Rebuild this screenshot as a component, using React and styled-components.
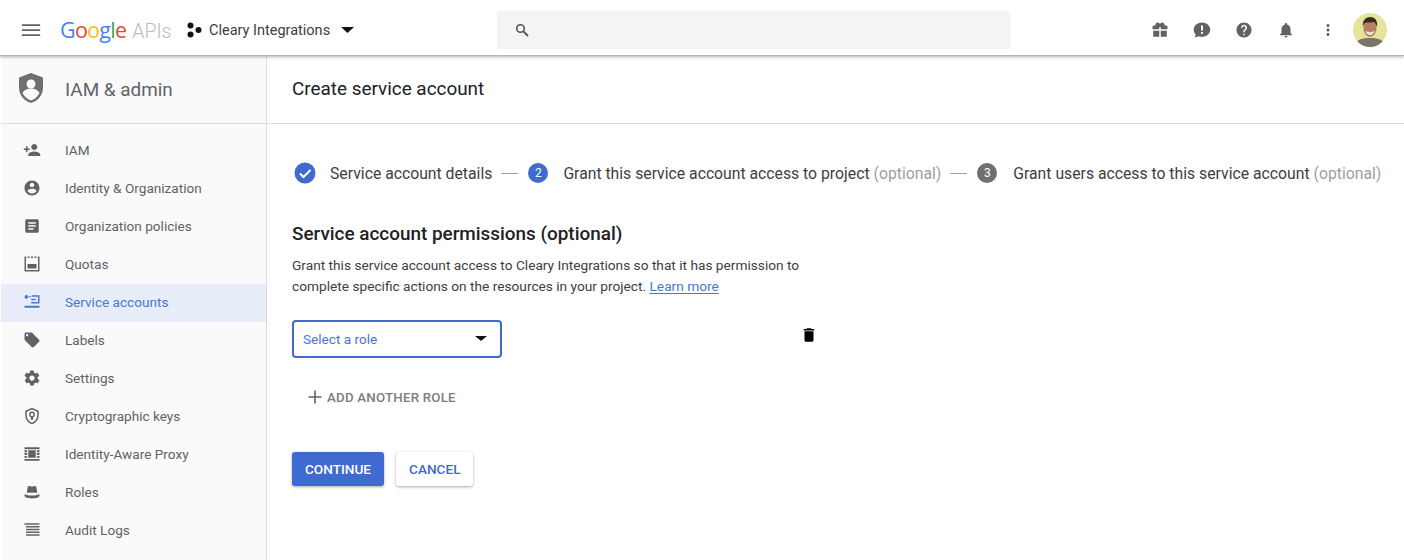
import React from 'react';
import styled, { createGlobalStyle } from 'styled-components';

const Global = createGlobalStyle`
  html, body { margin: 0; padding: 0; background: #fff; }
  body { font-family: Roboto, "Liberation Sans", sans-serif; width: 1404px; height: 560px; overflow: hidden; }
  * { box-sizing: border-box; }
`;

const Page = styled.div`
  width: 1404px; height: 560px; display: flex; flex-direction: column; overflow: hidden;
`;
const Header = styled.header`
  height: 56px; flex: none; display: flex; align-items: center; background: #fff;
  padding: 5px 0 0 21px; position: relative; z-index: 2;
  border-bottom: 1px solid #b4b4b4;
  box-shadow: 0 1px 3px rgba(0,0,0,.3);
`;
const Logo = styled.div`
  display: flex; align-items: baseline; margin-left: 19px; font-family: "Open Sans", Roboto, sans-serif;
  font-size: 21.5px; letter-spacing: -0.75px; width: 127px; margin-top: -1px;
`;
const Apis = styled.span`
  color: #b9bbbe; margin-left: 6px; font-family: Roboto, sans-serif; font-size: 19.5px; font-weight: 300; letter-spacing: 0;
`;
const Project = styled.div`
  display: flex; align-items: center; font-size: 14.5px; color: #3c4043; width: 310px;
`;
const ProjectName = styled.span`
  margin-left: 7px; margin-right: 11px;
`;
const Search = styled.div`
  width: 513px; height: 38px; background: #f4f4f4; border-radius: 2px; display: flex; align-items: center; padding-left: 18px;
`;
const Actions = styled.div`
  margin-left: 129px; display: flex; align-items: center;
`;
const ActionSlot = styled.div`
  width: 42px; display: flex; justify-content: center; align-items: center;
`;
const Avatar = styled.svg`
  width: 34px; height: 34px; margin-left: 4px; border-radius: 50%; flex: none;
`;
const Body = styled.div`
  flex: 1; display: flex; min-height: 0;
`;
const Side = styled.aside`
  width: 267px; flex: none; background: #fafafa; border-right: 1px solid #dadce0; border-left: 1px solid #fff;
`;
const SideHead = styled.div`
  height: 68px; display: flex; align-items: center; padding-left: 17px; border-bottom: 1px solid #dadce0;
  font-size: 18.9px; color: #5f6368;
`;
const ShieldIcon = styled.svg`
  width: 26px; height: 32px; margin-top: -3px; flex: none;
`;
const SideTitle = styled.span`
  margin-left: 21px; margin-top: -1px;
`;
const Nav = styled.nav`
  padding-top: 8px;
`;
const Item = styled.div`
  height: 38px; display: flex; align-items: center; padding-left: 22px; font-size: 13.6px; padding-bottom: 2px;
  color: ${p => (p.$active ? '#4a76d4' : '#5f6368')};
  background: ${p => (p.$active ? '#e8eef9' : 'transparent')};
`;
const ItemIcon = styled.svg`
  width: 18px; height: 18px; flex: none; fill: currentColor;
`;
const ItemLabel = styled.span`
  margin-left: 24px; margin-top: -1px;
`;
const Main = styled.main`
  flex: 1; min-width: 0;
`;
const MainHead = styled.div`
  height: 68px; display: flex; align-items: center; padding: 0 0 2px 25px; border-bottom: 1px solid #dadce0;
  font-size: 18.9px; color: #202124;
`;
const Content = styled.div`
  padding: 34px 0 0 25px;
`;
const Steps = styled.div`
  display: flex; align-items: center; height: 30px; font-size: 15.75px; color: #3c4043; white-space: nowrap;
`;
const StepNum = styled.span`
  width: 20px; height: 20px; border-radius: 50%; display: flex; align-items: center; justify-content: center;
  font-size: 12px; color: #fff; background: ${p => (p.$grey ? '#6f6f6f' : '#3f6ad0')};
  margin-right: ${p => (p.$grey ? '16px' : '15px')}; flex: none;
`;
const Check = styled.svg`
  width: 22px; height: 22px; margin-left: 2px; margin-right: 14px; flex: none;
`;
const Dash = styled.span`
  width: 17px; height: 1px; background: #9e9e9e; margin: 0 10px 0 9px; flex: none;
`;
const Optional = styled.span`
  color: #9aa0a6; margin-left: 4px;
`;
const Title = styled.h2`
  margin: 34px 0 0; font-size: 18.9px; line-height: 24px; font-weight: 500; color: #202124;
`;
const Desc = styled.p`
  margin: 9px 0 0; width: 525px; font-size: 13.7px; line-height: 21px; color: #3c4043;
`;
const Learn = styled.a`
  color: #4a76d4; text-decoration: underline; text-underline-offset: 2px; text-decoration-thickness: 1px;
`;
const RoleRow = styled.div`
  display: flex; align-items: flex-start; margin-top: 23px;
`;
const Select = styled.div`
  width: 210px; height: 38px; border: 2px solid #3f6ad0; border-radius: 4px; display: flex; align-items: center;
  justify-content: space-between; padding: 0 13px 1px 9px; font-size: 13.6px; color: #4a76d4;
`;
const Caret = styled.span`
  width: 0; height: 0; border-left: 6px solid transparent; border-right: 6px solid transparent; border-top: 5.5px solid #111;
`;
const Trash = styled.svg`
  width: 18px; height: 18px; margin-left: 298px; margin-top: 6px; fill: #000;
`;
const AddRole = styled.div`
  display: flex; align-items: center; margin: 31px 0 0 15px; font-size: 13.3px; font-weight: 500; color: #7d7d7d; letter-spacing: .2px;
`;
const PlusIcon = styled.svg`
  width: 16px; height: 16px; margin-right: 4px; fill: #5f6368; flex: none;
`;
const Buttons = styled.div`
  display: flex; gap: 12px; margin-top: 47px;
`;
const Btn = styled.button`
  height: 34px; padding: 0 13px; border: 0; border-radius: 3px; font: 500 13.6px Roboto, sans-serif;
  color: ${p => (p.$primary ? '#fff' : '#3f6ad0')}; background: ${p => (p.$primary ? '#3f6ad0' : '#fff')};
  box-shadow: 0 1px 3px rgba(0,0,0,.35);
`;

const icons = {
  iam: 'M15 12c2.200 0 4-1.800 4-4s-1.800-4-4-4-4 1.800-4 4 1.800 4 4 4zm-9-2V7H4v3H1v2h3v3h2v-3h3v-2H6zm9 4c-2.700 0-8 1.300-8 4v2h16v-2c0-2.700-5.300-4-8-4z',
  id: 'M12 2C6.500 2 2 6.500 2 12s4.500 10 10 10 10-4.500 10-10S17.500 2 12 2zm0 3c1.700 0 3 1.300 3 3s-1.300 3-3 3-3-1.300-3-3 1.300-3 3-3zm0 14.200c-2.500 0-4.700-1.300-6-3.200 0-2 4-3.100 6-3.100s6 1.100 6 3.100c-1.300 1.900-3.500 3.200-6 3.200z',
  policy: 'M19 3H5c-1.100 0-2 .9-2 2v14c0 1.100.9 2 2 2h14c1.100 0 2-.9 2-2V5c0-1.100-.9-2-2-2zm-5 14H7v-2h7v2zm3-4H7v-2h10v2zm0-4H7V7h10v2z',
  quota: 'M2 2h2.500v2H2zm4.300 0h2.500v2H6.300zm4.400 0h2.600v2h-2.600zm4.500 0h2.500v2h-2.500zm4.300 0H22v2h-2.500zM2 4h2v16h16V4h2v18H2zM6 12h12v6H6z',
  service: 'M2 5a2.500 2.500 0 1 0 5 0 2.500 2.500 0 0 0-5 0zm5.600-.8h3.400v1.600H7.600zM12 3h10v11H11v-2h9V5h-8zM11 7.500h6v2h-6zM2 17h20v2.500H2z',
  labels: 'M21.400 11.600l-9-9C12 2.200 11.500 2 11 2H4c-1.100 0-2 .9-2 2v7c0 .6.2 1.100.6 1.400l9 9c.4.4.9.6 1.400.6s1.100-.2 1.400-.6l7-7c.4-.4.6-.9.6-1.400s-.2-1.100-.6-1.400zM5.500 7C4.700 7 4 6.300 4 5.500S4.700 4 5.500 4 7 4.700 7 5.500 6.300 7 5.500 7z',
  settings: 'M19.400 13c0-.3.1-.6.1-1s0-.7-.1-1l2.100-1.600c.2-.2.2-.4.1-.6l-2-3.500c-.1-.2-.4-.3-.6-.2l-2.500 1c-.5-.4-1.100-.7-1.700-1l-.4-2.600c0-.2-.2-.4-.5-.4h-4c-.3 0-.5.2-.5.4l-.4 2.600c-.6.3-1.200.6-1.700 1l-2.500-1c-.2-.1-.5 0-.6.2l-2 3.500c-.1.2-.1.5.1.6L4.600 11c0 .3-.1.6-.1 1s0 .7.1 1l-2.100 1.600c-.2.2-.2.4-.1.6l2 3.500c.1.2.4.3.6.2l2.500-1c.5.4 1.100.7 1.700 1l.4 2.600c0 .2.2.4.5.4h4c.3 0 .5-.2.5-.4l.4-2.600c.6-.3 1.200-.6 1.700-1l2.500 1c.2.1.5 0 .6-.2l2-3.500c.1-.2.1-.5-.1-.6L19.400 13zM12 15.500c-1.900 0-3.500-1.600-3.500-3.500s1.600-3.500 3.500-3.500 3.500 1.600 3.500 3.500-1.600 3.500-3.500 3.500z',
  crypto: 'M12 1L3 5v6c0 5.500 3.800 10.700 9 12 5.200-1.300 9-6.500 9-12V5l-9-4zm0 2.200l7 3.100V11c0 4.500-3 8.700-7 9.900-4-1.200-7-5.400-7-9.900V6.300l7-3.100zM12 6a4 4 0 0 0-1.500 7.700V17h3v-3.300A4 4 0 0 0 12 6zm0 2a2 2 0 1 1 0 4 2 2 0 0 1 0-4z',
  proxy: 'M2 3h20v2.500H2zm0 15.500h20V21H2zM7 7h10v10H7zM2 7h3.500v2.500H2zm0 3.800h3.500v2.500H2zm0 3.700h3.500V17H2zM18.500 7H22v2.500h-3.500zm0 3.800H22v2.500h-3.500zm0 3.700H22V17h-3.500z',
  roles: 'M6 6c.3-1.200 1.200-2 2.500-2 1 0 2.200.6 3.500.6S14.500 4 15.500 4c1.300 0 2.200.8 2.500 2l1 7H5zM2 15c3 1.300 6.500 1.800 10 1.800s7-.5 10-1.800v2c0 2-5 3.500-10 3.500S2 19 2 17z',
  audit: 'M2 3h20v2H2zm2 3.700h18v2H4zm0 3.700h18v2H4zm0 3.700h18v2H4zm0 3.700h18v2H4z',
};

const items = [
  ['iam', 'IAM'],
  ['id', 'Identity & Organization'],
  ['policy', 'Organization policies'],
  ['quota', 'Quotas'],
  ['service', 'Service accounts', true],
  ['labels', 'Labels'],
  ['settings', 'Settings'],
  ['crypto', 'Cryptographic keys'],
  ['proxy', 'Identity-Aware Proxy'],
  ['roles', 'Roles'],
  ['audit', 'Audit Logs'],
];

const topIcons = [
  'M20 6h-2.200c.1-.3.2-.7.2-1 0-1.700-1.300-3-3-3-1 0-1.900.5-2.500 1.300L12 4l-.5-.7C10.900 2.500 10 2 9 2 7.300 2 6 3.300 6 5c0 .3.1.7.2 1H4C2.900 6 2 6.900 2 8v3h9V8h2v3h9V8c0-1.100-.9-2-2-2zM3 13v8h8v-8zm10 0v8h8v-8z',
  'M12 2C6 2 1 6 1 11.500c0 2.500 1 4.800 2.700 6.500L2 22l5.500-1.800c1.400.5 2.900.8 4.500.8 6 0 11-4.300 11-9.500S18 2 12 2zm1.300 15h-2.600v-2.500h2.600zm0-4.500h-2.600V6h2.600z',
  'M12 2C6.500 2 2 6.500 2 12s4.500 10 10 10 10-4.500 10-10S17.500 2 12 2zm1 17h-2v-2h2zm2.100-7.700l-.9.900c-.8.700-1.200 1.300-1.200 2.800h-2v-.5c0-1.100.4-2.100 1.200-2.800l1.200-1.300c.4-.3.600-.8.600-1.400 0-1.100-.9-2-2-2s-2 .9-2 2H8c0-2.200 1.800-4 4-4s4 1.800 4 4c0 .9-.4 1.700-.9 2.300z',
  'M12 22c1.100 0 2-.9 2-2h-4c0 1.100.9 2 2 2zm6-6v-5c0-3.100-1.600-5.600-4.500-6.300V4c0-.8-.7-1.500-1.500-1.500s-1.500.7-1.500 1.500v.7C7.600 5.400 6 7.900 6 11v5l-2 2v1h16v-1z',
  'M12 8c1.100 0 2-.9 2-2s-.9-2-2-2-2 .9-2 2 .9 2 2 2zm0 2c-1.100 0-2 .9-2 2s.9 2 2 2 2-.9 2-2-.9-2-2-2zm0 6c-1.100 0-2 .9-2 2s.9 2 2 2 2-.9 2-2-.9-2-2-2z',
];

const GoogleWord = () => (
  <span>
    <span style={{ color: '#4285f4' }}>G</span>
    <span style={{ color: '#ea4335' }}>o</span>
    <span style={{ color: '#fbbc05' }}>o</span>
    <span style={{ color: '#4285f4' }}>g</span>
    <span style={{ color: '#34a853' }}>l</span>
    <span style={{ color: '#ea4335' }}>e</span>
  </span>
);

export default function App() {
  return (
    <Page>
      <Global />
      <Header>
        <svg width="20" height="20" viewBox="0 0 24 24" fill="#5f6368"><path d="M1 5h22v2.200H1zm0 6h22v2.200H1zm0 6h22v2.200H1z" /></svg>
        <Logo><GoogleWord /><Apis>APIs</Apis></Logo>
        <Project>
          <svg width="15" height="16" viewBox="0 0 15 16" fill="#111"><circle cx="3.500" cy="3.500" r="3" /><circle cx="3.500" cy="12.500" r="3" /><circle cx="11.500" cy="8" r="3" /></svg>
          <ProjectName>Cleary Integrations</ProjectName>
          <svg width="13" height="6" viewBox="0 0 13 6" fill="#111"><path d="M0 0h13L6.500 6z" /></svg>
        </Project>
        <Search>
          <svg width="14" height="14" viewBox="0 0 14 14" fill="none" stroke="#555"><circle cx="5.500" cy="5.500" r="3.800" strokeWidth="1.600" /><path d="M8.400 8.400L13 13" strokeWidth="2" /></svg>
        </Search>
        <Actions>
          {topIcons.map((d, i) => (
            <ActionSlot key={i}>
              <svg width="18" height="18" viewBox="0 0 24 24" fill="#5f6368"><path d={d} /></svg>
            </ActionSlot>
          ))}
          <Avatar viewBox="0 0 34 34">
            <defs><filter id="soft"><feGaussianBlur stdDeviation="0.6" /></filter></defs>
            <rect width="34" height="34" fill="#e6e39a" />
            <g filter="url(#soft)">
              <path d="M2 34c0-7 6-9 15-9s15 2 15 9z" fill="#77756c" />
              <ellipse cx="17" cy="15" rx="6.500" ry="9" fill="#b5805e" />
              <path d="M10 14c-1-7 3-10 7.500-10S25 8 24 14c-1-3-2-5-4-5-3 1-6 0-8 1-1 1-2 2-2 4z" fill="#3a2c22" />
              <path d="M12.500 18c3 1.500 6 1.500 9 0-1 3-2.500 4-4.500 4s-3.500-1-4.500-4z" fill="#efe8df" />
            </g>
          </Avatar>
        </Actions>
      </Header>
      <Body>
        <Side>
          <SideHead>
            <ShieldIcon viewBox="0 0 26 32"><path d="M13 1L1 5.500v10C1 23 6 29 13 31c7-2 12-8 12-15.500v-10z" fill="#6f6f6f" /><circle cx="13" cy="12" r="4.500" fill="#fafafa" /><path d="M4.500 21c2-3.500 5.500-4.500 8.500-4.500s6.500 1 8.500 4.500C19.500 25 16 27.500 13 28.500 10 27.500 6.500 25 4.500 21z" fill="#fafafa" /></ShieldIcon>
            <SideTitle>IAM &amp; admin</SideTitle>
          </SideHead>
          <Nav>
            {items.map(([ic, label, active]) => (
              <Item key={label} $active={active}>
                <ItemIcon viewBox="0 0 24 24"><path d={icons[ic]} fillRule="evenodd" /></ItemIcon>
                <ItemLabel>{label}</ItemLabel>
              </Item>
            ))}
          </Nav>
        </Side>
        <Main>
          <MainHead>Create service account</MainHead>
          <Content>
            <Steps>
              <Check viewBox="0 0 22 22"><circle cx="11" cy="11" r="10.500" fill="#3f6ad0" /><path d="M6 11.500l3.500 3.500L16.500 8" fill="none" stroke="#fff" strokeWidth="2" /></Check>
              Service account details
              <Dash />
              <StepNum>2</StepNum>
              Grant this service account access to project<Optional>(optional)</Optional>
              <Dash />
              <StepNum $grey>3</StepNum>
              Grant users access to this service account<Optional>(optional)</Optional>
            </Steps>
            <Title>Service account permissions (optional)</Title>
            <Desc>
              Grant this service account access to Cleary Integrations so that it has permission to complete specific actions on the resources in your project. <Learn>Learn more</Learn>
            </Desc>
            <RoleRow>
              <Select>Select a role<Caret /></Select>
              <Trash viewBox="0 0 24 24"><path d="M6 19c0 1.100.9 2 2 2h8c1.100 0 2-.9 2-2V7H6zM19 4h-3.500l-1-1h-5l-1 1H5v2h14z" /></Trash>
            </RoleRow>
            <AddRole>
              <PlusIcon viewBox="0 0 16 16"><path d="M7.200 1.500h1.600v5.700h5.700v1.600H8.800v5.700H7.200V8.800H1.500V7.200h5.700z" /></PlusIcon>
              ADD ANOTHER ROLE
            </AddRole>
            <Buttons>
              <Btn $primary>CONTINUE</Btn>
              <Btn>CANCEL</Btn>
            </Buttons>
          </Content>
        </Main>
      </Body>
    </Page>
  );
}
